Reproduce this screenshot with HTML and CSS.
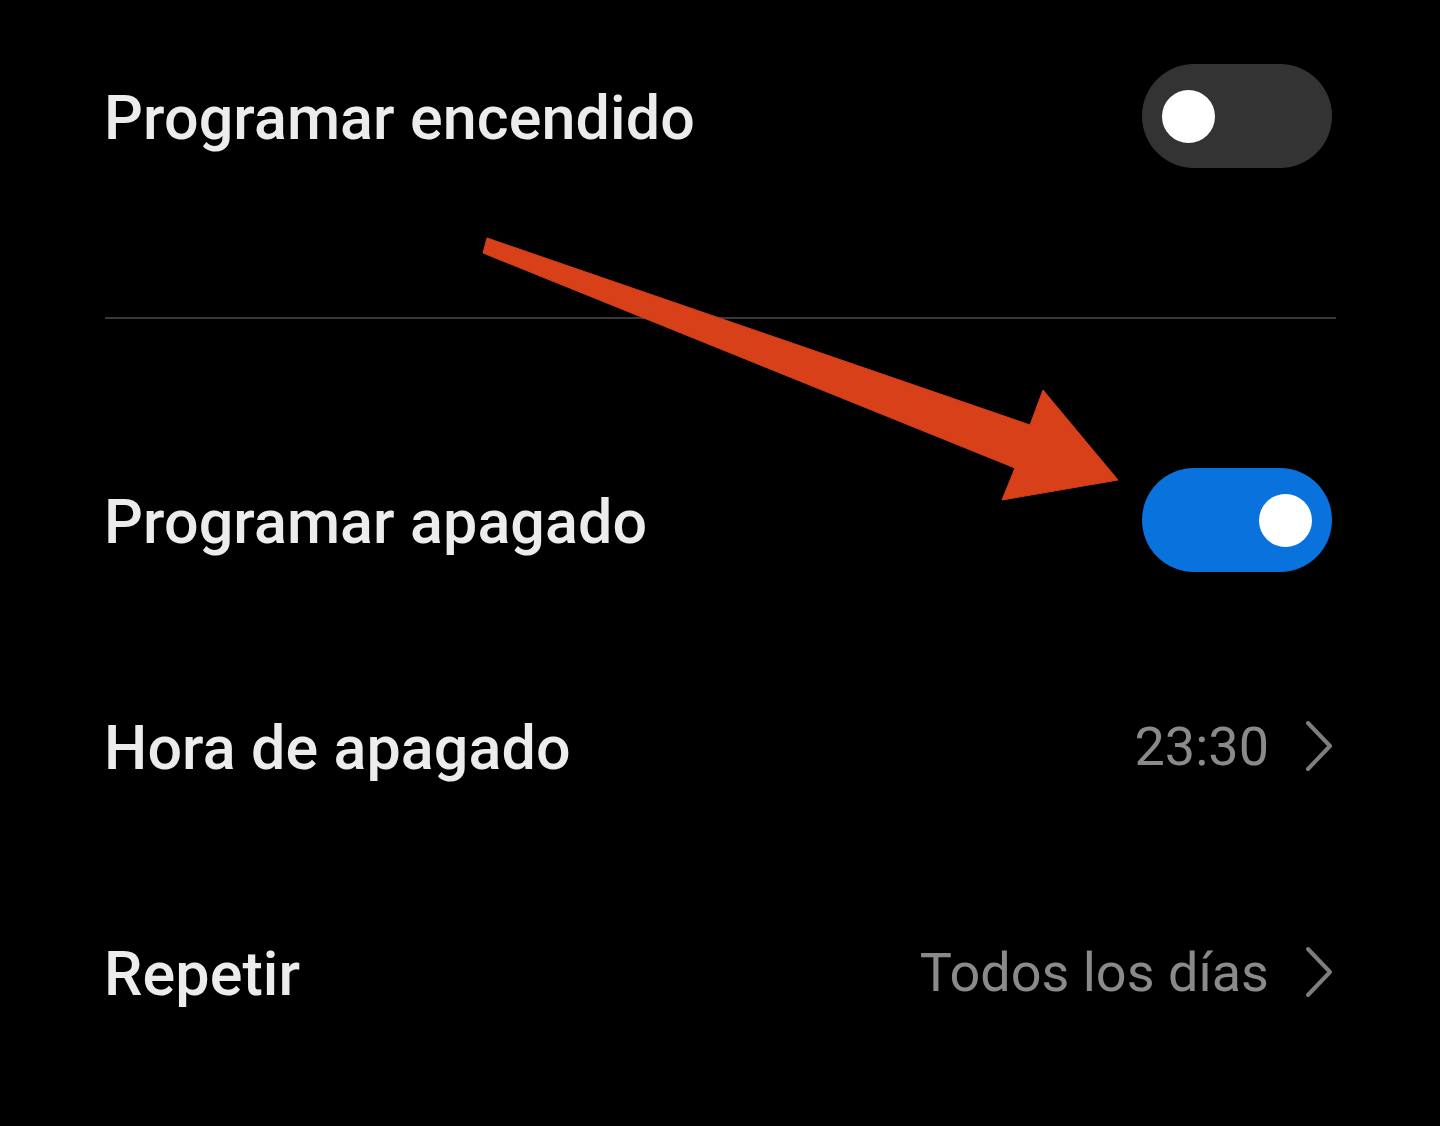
FILE: index.html
```html
<!DOCTYPE html>
<html lang="es">
<head>
<meta charset="utf-8">
<title>Programar encendido y apagado</title>
<link rel="stylesheet" href="styles.css">
</head>
<body>
<main class="settings">
  <div class="row row-first">
    <span class="label">Programar encendido</span>
    <span class="switch"><span class="knob"></span></span>
  </div>
  <div class="divider"></div>
  <div class="row">
    <span class="label">Programar apagado</span>
    <span class="switch switch-on"><span class="knob"></span></span>
  </div>
  <div class="row">
    <span class="label">Hora de apagado</span>
    <span class="value">23:30
      <svg class="chevron" viewBox="0 0 28 52" width="28" height="52"><path d="M3 3 L25 26 L3 49" fill="none" stroke="currentColor" stroke-width="4" stroke-linecap="round" stroke-linejoin="round"/></svg>
    </span>
  </div>
  <div class="row">
    <span class="label">Repetir</span>
    <span class="value">Todos los días
      <svg class="chevron" viewBox="0 0 28 52" width="28" height="52"><path d="M3 3 L25 26 L3 49" fill="none" stroke="currentColor" stroke-width="4" stroke-linecap="round" stroke-linejoin="round"/></svg>
    </span>
  </div>

  <svg class="pointer" viewBox="0 0 1440 1126" width="1440" height="1126">
    <polygon points="487,238 1030,425 1043,390 1118,480 1002,500 1015,468 483,253" fill="#d8401a" stroke="#d8401a" stroke-width="1" stroke-linejoin="round"/>
  </svg>
</main>
</body>
</html>
```
FILE: styles.css
```css
html, body {
  margin: 0;
  padding: 0;
  background: #000;
}

body {
  width: 1440px;
  height: 1126px;
  overflow: hidden;
  font-family: Roboto, "Noto Sans", "Liberation Sans", sans-serif;
}

.settings {
  position: relative;
  height: 1126px;
  padding: 0 108px 0 104px;
  box-sizing: border-box;
  display: flex;
  flex-direction: column;
}

.row {
  height: 226px;
  display: flex;
  align-items: center;
  justify-content: space-between;
}

.row-first {
  margin-top: 3px;
  margin-bottom: 88px;
}

.divider {
  height: 2px;
  background: #383838;
  margin: 0 -4px 88px 1px;
}

.label {
  color: #ececec;
  font-size: 61px;
  font-weight: 500;
  letter-spacing: 0.1px;
  padding-top: 4px;
}

.value {
  display: flex;
  align-items: center;
  gap: 36px;
  color: #8a8a8a;
  font-size: 54px;
  font-weight: 400;
}

.chevron {
  display: block;
  color: #7e7e7e;
  margin-right: -1px;
}

.switch {
  width: 190px;
  height: 104px;
  border-radius: 52px;
  background: #333333;
  display: flex;
  align-items: center;
  padding: 0 20px;
  box-sizing: border-box;
}

.switch-on {
  background: #0a72dc;
  justify-content: flex-end;
}

.knob {
  width: 53px;
  height: 53px;
  border-radius: 50%;
  background: #ffffff;
}

.pointer {
  position: absolute;
  left: 0;
  top: 0;
  pointer-events: none;
}
```
